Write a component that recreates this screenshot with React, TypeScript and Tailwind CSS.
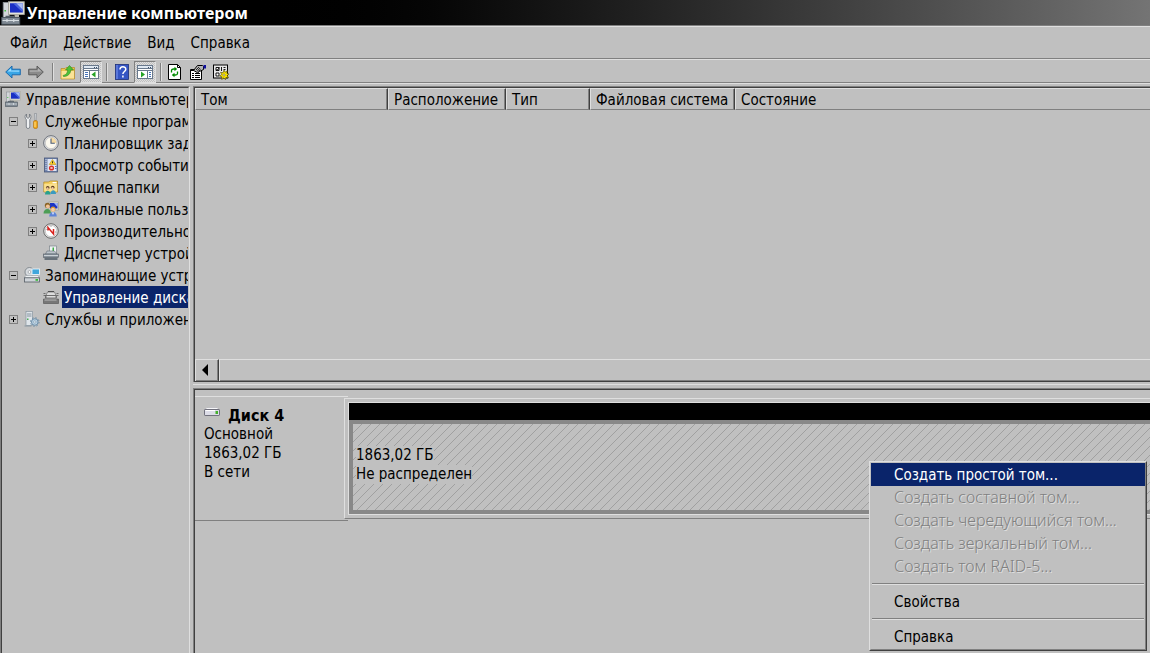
import { clsx } from "clsx";
import type { ReactNode } from "react";

function Svg({ size = 16, children }: { size?: number; children: ReactNode }) {
  return (
    <svg
      width={size}
      height={size}
      viewBox="0 0 16 16"
      className="block shrink-0"
      aria-hidden="true"
    >
      {children}
    </svg>
  );
}

function ComputerIcon({ size }: { size?: number }) {
  return (
    <Svg size={size}>
      <rect x="1.5" y="1" width="4" height="10" fill="#d3d6da" stroke="#8b9096" strokeWidth=".6" />
      <rect x="2.3" y="6" width="1" height="1" fill="#3fbf3f" />
      <rect x="5" y=".5" width="10.5" height="8.5" fill="#e4e4dc" stroke="#a5a59c" strokeWidth=".6" />
      <rect x="6" y="1.5" width="8.5" height="6.2" fill="#1a2fc4" />
      <path d="M10 1.5h4.5v4.5z" fill="#a9bdf5" />
      <path d="M8 1.5h2l4.5 4.5v1.7z" fill="#4c68e0" />
      <rect x="9" y="9" width="3" height="2" fill="#b9b9b0" />
      <path d="M3.5 11.5v-1.2h5v1.2" fill="none" stroke="#566069" />
      <rect x=".5" y="11" width="12" height="4.5" fill="#818b95" stroke="#4c565f" strokeWidth=".6" />
      <path d="M1 13h11M4 12v2M8.5 12v2" stroke="#d7dde2" strokeWidth=".8" />
    </Svg>
  );
}

function ToolsIcon() {
  return (
    <Svg>
      <path
        d="M2.5 1v3l1.5 1.5L5.5 4V1c1.8 1 2 4 .3 5.5V14c0 2-3.5 2-3.5 0V6.5C.4 5 .8 2 2.5 1z"
        fill="#eef0f2"
        stroke="#686f76"
        strokeWidth=".8"
      />
      <path d="M10.5.5h2l-.4 7h-1.2z" fill="#d0d4d8" stroke="#747b82" strokeWidth=".5" />
      <rect x="9.5" y="7.5" width="4" height="8" rx="1.5" fill="#f0a81c" stroke="#b06f08" strokeWidth=".6" />
      <path d="M11 9v5" stroke="#ffe08a" />
    </Svg>
  );
}

function ClockIcon() {
  return (
    <Svg>
      <circle cx="8" cy="8" r="7.4" fill="#d9dade" stroke="#70757c" />
      <circle cx="8" cy="8" r="5.7" fill="#fbf8ee" stroke="#a9a9a9" strokeWidth=".5" />
      <path d="M8 8h5.4A5.5 5.5 0 0 0 8 2.5z" fill="#f5d9a0" />
      <path d="M8 3.5V8.3h3.8" fill="none" stroke="#4a5b78" strokeWidth="1.1" />
    </Svg>
  );
}

function EventIcon() {
  return (
    <Svg>
      <rect x="1.5" y="1" width="13" height="14" fill="#7487b0" stroke="#465679" strokeWidth=".8" />
      <rect x="4.5" y="2" width="9" height="12" fill="#dfe6f4" />
      <path d="M3 2v12" stroke="#d4dbea" strokeDasharray="1 1" />
      <path d="M9.5 2.5l3.5 5H6.2z" fill="#ffd42a" stroke="#b38600" strokeWidth=".5" />
      <path d="M9.5 4.3v2" stroke="#222" strokeWidth=".9" />
      <circle cx="8.5" cy="11" r="2.6" fill="#d92f26" />
      <path d="M7.5 10l2 2m0-2l-2 2" stroke="#fff" strokeWidth=".8" />
      <path d="M12 9.5h1.5M12 11.5h1.5" stroke="#5a74b8" />
    </Svg>
  );
}

function SharedFolderIcon() {
  return (
    <Svg>
      <path d="M.8 3h5l1-1h7.7v11H.8z" fill="#f5cf5f" stroke="#ad8424" strokeWidth=".7" />
      <path d="M1.2 5h13v7.5h-13z" fill="#fbe08c" />
      <rect x="9.5" y="3" width="4" height="1.3" fill="#fff" />
      <circle cx="4.7" cy="8.8" r="1.8" fill="#5a3c1e" />
      <circle cx="9.7" cy="8.5" r="1.8" fill="#5a3c1e" />
      <circle cx="4.5" cy="9.5" r="1.2" fill="#f2c8a0" />
      <circle cx="9.5" cy="9.2" r="1.2" fill="#f2c8a0" />
      <path d="M2 15.5c0-5 5.5-5 5.5 0z" fill="#29a08c" />
      <path d="M7.5 15c0-5 5.5-5 5.5 0z" fill="#3a9ac0" />
    </Svg>
  );
}

function UsersIcon() {
  return (
    <Svg>
      <rect x="6" y="1" width="9.5" height="8" fill="#e2e2da" stroke="#8e8e86" strokeWidth=".6" />
      <rect x="7" y="2" width="7.5" height="5.5" fill="#1b35c6" />
      <path d="M11 2h3.5v4z" fill="#9db4f5" />
      <circle cx="4.5" cy="4.5" r="2.7" fill="#8a6428" />
      <circle cx="4.8" cy="5.3" r="1.9" fill="#f2c296" />
      <path d="M.5 12.5c0-6 7.5-6 7.5 0z" fill="#4d9e56" />
      <circle cx="10" cy="8" r="2.5" fill="#d7972c" />
      <circle cx="10" cy="8.7" r="1.9" fill="#f7cda4" />
      <path d="M6.2 15.5c0-6 7.6-6 7.6 0z" fill="#5e84d8" />
      <path d="M9 11.5l1 2.5 1-2.5z" fill="#fff" />
    </Svg>
  );
}

function PerformanceIcon() {
  return (
    <Svg>
      <circle cx="8" cy="8" r="7.3" fill="#e8e8e8" stroke="#686868" />
      <circle cx="8" cy="8" r="5.7" fill="#fff" stroke="#9a9a9a" strokeWidth=".5" />
      <path d="M5 7.5V4.5l5.5 6.5V6" fill="none" stroke="#d8201c" strokeWidth="1.5" />
      <path d="M3.500 6.5h1M12 9h1M8 2.8v1" stroke="#666" strokeWidth=".7" />
    </Svg>
  );
}

function DeviceIcon() {
  return (
    <Svg>
      <rect x="6.5" y="1" width="7" height="8" fill="#f0f2f4" stroke="#7b838a" strokeWidth=".7" />
      <rect x="9.5" y="2.5" width="1.5" height="4" fill="#3cae44" />
      <path d="M2.5 9l1.5-3h7.5l2.5 3z" fill="#bcc4cb" stroke="#636c75" strokeWidth=".6" />
      <rect x=".5" y="9" width="15" height="3.5" fill="#8b959e" stroke="#555e67" strokeWidth=".6" />
      <rect x="1.5" y="12.5" width="13" height="2.5" fill="#67717a" />
      <path d="M1 10.5h14" stroke="#dce1e5" strokeWidth=".8" />
    </Svg>
  );
}

function StorageIcon() {
  return (
    <Svg>
      <circle cx="5.5" cy="5" r="4.5" fill="#d7dbdf" stroke="#747b82" strokeWidth=".8" />
      <circle cx="5.5" cy="5" r="1.4" fill="#fff" stroke="#848b92" strokeWidth=".6" />
      <rect x="8" y="2" width="7.5" height="5.5" fill="#3fa6dc" stroke="#e7f2f8" strokeWidth=".9" />
      <path d="M1.5 8.5h12.5l1.5 2.5H.5z" fill="#eceff1" stroke="#8b9299" strokeWidth=".5" />
      <rect x=".5" y="10.8" width="15" height="4.2" fill="#ced3d8" stroke="#555d65" strokeWidth=".8" />
      <rect x="11.5" y="12" width="2.5" height="1.8" fill="#38b838" />
    </Svg>
  );
}

function DiskManagementIcon() {
  return (
    <Svg>
      <path d="M3 6.5L4.5 3h7L13 6.5z" fill="#dcdcdc" stroke="#6c6c6c" strokeWidth=".7" />
      <path d="M5 2.5h6" stroke="#4e4e4e" />
      <path d="M.5 4.5h2M13.5 4.5h2M.5 6.5H2M14 6.5h1.5" stroke="#6e6e6e" />
      <rect x="2.5" y="6.5" width="11" height="2.5" fill="#a9a9a9" stroke="#5b5b5b" strokeWidth=".7" />
      <path d="M4 7.8h8" stroke="#f2f2f2" />
      <path d="M.5 10h15v4.5H.5z" fill="#777" stroke="#505050" strokeWidth=".6" />
      <path d="M1.5 11h12" stroke="#ddd" strokeWidth=".7" />
    </Svg>
  );
}

function ServicesIcon() {
  return (
    <Svg>
      <rect x="2" y=".5" width="6.5" height="14" fill="#dfe5ea" stroke="#8996a0" strokeWidth=".7" />
      <path d="M3 3h4.5M3 5h4.5" stroke="#84929d" />
      <rect x="3" y="7.5" width="1.5" height="1.5" fill="#4aae55" />
      <path d="M.5 15h7" stroke="#8996a0" />
      <circle cx="10.8" cy="11" r="3.3" fill="#b9d0e2" stroke="#6d8ea8" />
      <circle cx="10.8" cy="11" r="4.3" fill="none" stroke="#6d8ea8" strokeDasharray="1.6 1.78" />
      <circle cx="10.8" cy="11" r="1.2" fill="#f0f5f8" stroke="#6d8ea8" strokeWidth=".6" />
    </Svg>
  );
}

function DriveIcon() {
  return (
    <Svg>
      <path d="M3 1.5h10l2 2H1z" fill="#f6f6f8" stroke="#a4a4ac" strokeWidth=".5" />
      <rect x=".5" y="3.5" width="15" height="6" rx=".6" fill="#dddde8" stroke="#70707c" />
      <path d="M1.5 4.5h9.5" stroke="#fff" />
      <rect x="11.5" y="5" width="2.5" height="3" fill="#43b02c" />
    </Svg>
  );
}

function BackIcon() {
  return (
    <Svg>
      <path d="M.7 8L7 2v3.2h8.3v5.6H7V14z" fill="#37a5e6" stroke="#1463a8" strokeWidth=".9" strokeLinejoin="round" />
      <path d="M2.5 7.5L6 4.2v2.3h8.3v1.2z" fill="#9bdcff" />
    </Svg>
  );
}

function ForwardIcon() {
  return (
    <Svg>
      <path d="M15.3 8L9 2v3.2H.7v5.6H9V14z" fill="#8a8a8a" stroke="#555" strokeWidth=".9" strokeLinejoin="round" />
      <path d="M13.5 7.5L10 4.2v2.3H1.7v1.2z" fill="#b3b3b3" />
    </Svg>
  );
}

function FolderUpIcon() {
  return (
    <Svg>
      <path d="M1 4.5h4l1-1h8.5V15H1z" fill="#f0c552" stroke="#b58a28" strokeWidth=".7" />
      <path d="M1.5 7h12.5v7.5H1.5z" fill="#fbe397" />
      <path
        d="M3 11.5c3.500-.5 4.500-3 4.700-5.500H5.500L9.500 1.500 13.500 6h-2.700c-.3 3.500-2.500 6.500-7.300 6.500z"
        fill="#4fc037"
        stroke="#2a8820"
        strokeWidth=".6"
      />
    </Svg>
  );
}

function PaneIcon({ flipped }: { flipped?: boolean }) {
  return (
    <Svg>
      <g shapeRendering="crispEdges">
        <rect x="0" y="1" width="16" height="14" fill="#68788c" />
        <rect x="1" y="2" width="14" height="2" fill="#dfe8f2" />
        <path d="M11 3h1M13 3h1" stroke="#3b4c64" />
        <rect x="1" y="5" width="14" height="1" fill="#fff" />
        <rect x="1" y="7" width={flipped ? 9 : 5} height="7" fill="#fff" />
        <rect x={flipped ? 11 : 7} y="7" width={flipped ? 4 : 8} height="7" fill="#fff" />
        <path
          d={flipped ? "M12 8.5h2M12 10.5h2M12 12.5h2" : "M2 8.5h3M2 10.5h3M2 12.5h3"}
          stroke="#4572b8"
        />
      </g>
      <path d={flipped ? "M4 7.5v6l4-3z" : "M12.5 7.5v6l-4-3z"} fill="#25a325" />
    </Svg>
  );
}

function HelpIcon() {
  return (
    <Svg>
      <rect x="1.5" y=".5" width="13" height="15" fill="#3455c4" stroke="#1c2f78" strokeWidth=".8" />
      <path d="M3 1v14" stroke="#7f9af0" />
      <path
        d="M6 5.5C6 2 11.8 2 11.8 5.3c0 2.2-2.9 2.2-2.9 4.7M8.9 11.5v2"
        fill="none"
        stroke="#fff"
        strokeWidth="1.5"
      />
    </Svg>
  );
}

function RefreshIcon() {
  return (
    <Svg>
      <path d="M1.5.5h9l3 3v12h-12z" fill="#fff" stroke="#000" />
      <path d="M10.5.5v3h3" fill="none" stroke="#000" />
      <path
        d="M4.5 8.500v-2c0-1 1-1.500 2-1.500H8M10.500 7.500v2c0 1-1 1.500-2 1.500H7"
        fill="none"
        stroke="#008a00"
        strokeWidth="1.3"
      />
      <path d="M7.5 2.8v4.4L10.2 5zM7.5 8.8v4.4L4.8 11z" fill="#008a00" />
    </Svg>
  );
}

function PropertiesIcon() {
  return (
    <Svg>
      <path d="M.5 5.5h11v10H.5z" fill="#fff" stroke="#000" />
      <path d="M1 6.5h10M2 9.5h2M5 9.5h5M2 11.5h2M5 11.5h5M2 13.5h2M5 13.5h5" stroke="#000" />
      <path d="M3.5 6.5l4-5h5l1 1v3l-4 2-2 1.5-1-1z" fill="#b4b4b4" stroke="#000" />
      <path d="M6 6l3-3M7 7.5L10 4M8.5 7.5l2-2" stroke="#000" strokeWidth=".8" />
      <path d="M13.5 1H16v3.5h-2.5z" fill="#1010a0" />
    </Svg>
  );
}

function SettingsIcon() {
  return (
    <Svg>
      <rect x=".5" y="1" width="14" height="13" fill="#e8e8e8" stroke="#000" />
      <path d="M3 3.5h3v3H3zM3 9h3v3H3z" fill="#fff" stroke="#000" strokeWidth=".9" />
      <path d="M8.5 3v4M10.5 3.5h2M10.5 5.5h2M3.5 5l1 1 2-2.5" fill="none" stroke="#000" strokeWidth=".9" />
      <path
        d="M11 6l1 2.300 2.300-1.500-.4 2.600 2.100.6-1.900 1.500 1.500 2.300-2.700-.4-.4 2.400-1.600-2-2.200 1.700.3-2.700-2.500-.7 2.200-1.600-1.200-2.200 2.500.5z"
        fill="#ffe800"
        stroke="#4a4200"
        strokeWidth=".6"
      />
      <circle cx="11" cy="11" r="1.1" fill="#fff" stroke="#4a4200" strokeWidth=".5" />
    </Svg>
  );
}

type TreeItem = {
  label: string;
  level: 0 | 1 | 2;
  icon: ReactNode;
  state?: "open" | "closed";
  selected?: boolean;
};

const tree: TreeItem[] = [
  { label: "Управление компьютером", level: 0, icon: <ComputerIcon /> },
  { label: "Служебные программы", level: 1, icon: <ToolsIcon />, state: "open" },
  { label: "Планировщик заданий", level: 2, icon: <ClockIcon />, state: "closed" },
  { label: "Просмотр событий", level: 2, icon: <EventIcon />, state: "closed" },
  { label: "Общие папки", level: 2, icon: <SharedFolderIcon />, state: "closed" },
  { label: "Локальные пользователи", level: 2, icon: <UsersIcon />, state: "closed" },
  { label: "Производительность", level: 2, icon: <PerformanceIcon />, state: "closed" },
  { label: "Диспетчер устройств", level: 2, icon: <DeviceIcon /> },
  { label: "Запоминающие устройства", level: 1, icon: <StorageIcon />, state: "open" },
  { label: "Управление дисками", level: 2, icon: <DiskManagementIcon />, selected: true },
  { label: "Службы и приложения", level: 1, icon: <ServicesIcon />, state: "closed" },
];

const columns = [
  { label: "Том", width: "w-[193px]" },
  { label: "Расположение", width: "w-[118px]" },
  { label: "Тип", width: "w-[84px]" },
  { label: "Файловая система", width: "w-[145px]" },
  { label: "Состояние", width: "w-auto" },
];

type MenuItem = { label: string; active?: boolean; disabled?: boolean };

const menuGroups: MenuItem[][] = [
  [
    { label: "Создать простой том...", active: true },
    { label: "Создать составной том...", disabled: true },
    { label: "Создать чередующийся том...", disabled: true },
    { label: "Создать зеркальный том...", disabled: true },
    { label: "Создать том RAID-5...", disabled: true },
  ],
  [{ label: "Свойства" }],
  [{ label: "Справка" }],
];

function Expander({ open }: { open: boolean }) {
  return (
    <button
      aria-label={open ? "Свернуть" : "Развернуть"}
      className="block size-[9px] border border-[#808080]"
    >
      <svg width="7" height="7" className="block" shapeRendering="crispEdges">
        <path d={open ? "M1 3.5h5" : "M1 3.5h5M3.5 1v5"} stroke="#000" />
      </svg>
    </button>
  );
}

function TreeRow({ item }: { item: TreeItem }) {
  return (
    <li
      className={clsx(
        "flex h-[22px] items-center whitespace-nowrap",
        item.level === 0 && "pl-[3px]",
        item.level === 1 && "pl-[7px]",
        item.level === 2 && "pl-[26px]",
      )}
    >
      {item.level > 0 && (
        <span className="mr-1.5 w-[9px] shrink-0">
          {item.state && <Expander open={item.state === "open"} />}
        </span>
      )}
      {item.icon}
      <a
        href="#"
        className={clsx(
          "ml-[3px] h-[22px] min-w-0 overflow-hidden px-0.5 leading-6",
          item.selected && "bg-[#0a246a] text-white",
        )}
      >
        {item.label}
      </a>
    </li>
  );
}

function ToolButton({
  label,
  pressed,
  children,
}: {
  label: string;
  pressed?: boolean;
  children: ReactNode;
}) {
  return (
    <button
      aria-label={label}
      aria-pressed={pressed}
      className={clsx(
        "flex h-[22px] items-center justify-center",
        pressed
          ? "w-[22px] border border-t-[#808080] border-r-[#dfdfdf] border-b-[#dfdfdf] border-l-[#808080] bg-[repeating-conic-gradient(#dfdfdf_0_25%,#c0c0c0_0_50%)] bg-size-[2px_2px]"
          : "w-4",
      )}
    >
      {children}
    </button>
  );
}

function ToolSeparator() {
  return (
    <div className="mr-0.5 h-[18px] w-0.5 border-r border-l border-r-[#dfdfdf] border-l-[#808080]" />
  );
}

function ContextMenu() {
  return (
    <div className="absolute top-[461px] left-[869px] w-[278px] border border-t-[#dfdfdf] border-r-[#404040] border-b-[#404040] border-l-[#dfdfdf] bg-[#c0c0c0]">
      <div className="border border-t-[#c0c0c0] border-r-[#808080] border-b-[#808080] border-l-[#c0c0c0] pb-px">
        {menuGroups.map((group, i) => (
          <div key={i}>
            {i > 0 && (
              <div className="flex h-3 items-center px-px">
                <hr className="h-0.5 w-full border-t border-b border-t-[#808080] border-b-[#dfdfdf]" />
              </div>
            )}
            {group.map((item) => (
              <button
                key={item.label}
                disabled={item.disabled}
                className={clsx(
                  "block h-[23px] w-full pl-[23px] text-left whitespace-nowrap",
                  item.active && "bg-[#0a246a] text-white",
                  item.disabled
                    ? "font-['Noto_Sans',sans-serif] text-[16px] leading-[23px] font-light text-[#808080] [text-shadow:1px_1px_0_#dfdfdf]"
                    : "leading-[25px]",
                )}
              >
                {item.label}
              </button>
            ))}
          </div>
        ))}
      </div>
    </div>
  );
}

function DiskRow() {
  return (
    <div className="flex">
      <div className="h-[125px] w-[153px] shrink-0 border-t border-b border-t-[#dfdfdf] border-b-[#808080] pt-[9px] pl-[9px] leading-[19px]">
        <div className="flex">
          <DriveIcon />
          <h2 className="ml-2 text-[16px] font-bold">Диск 4</h2>
        </div>
        <p>Основной</p>
        <p>1863,02 ГБ</p>
        <p>В сети</p>
      </div>
      <div className="mt-0.5 -ml-1 h-[121px] min-w-0 flex-1 border-t border-b border-l border-t-[#dfdfdf] border-b-[#808080] border-l-[#dfdfdf] pt-[3px] pl-[3px]">
        <div className="border-t border-b border-l border-[#dfdfdf]">
          <div className="h-[17px] bg-black" />
          <div className="relative h-[94px] border-4 border-r-0 border-[#888888] pt-[22px] pl-[3px] leading-[19px]">
            <svg className="absolute inset-0 size-full" aria-hidden="true">
              <defs>
                <pattern id="hatch" width="9" height="9" patternUnits="userSpaceOnUse">
                  <path d="M-1 10L10-1M-1 1L1-1M8 10L10 8" stroke="#929292" strokeWidth=".7" />
                </pattern>
              </defs>
              <rect width="100%" height="100%" fill="url(#hatch)" />
            </svg>
            <p className="relative w-fit bg-[#c0c0c0]">1863,02 ГБ</p>
            <p className="relative w-fit bg-[#c0c0c0]">Не распределен</p>
          </div>
        </div>
      </div>
    </div>
  );
}

export default function App() {
  return (
    <div className="relative flex h-screen flex-col overflow-hidden bg-[#c0c0c0] font-['DejaVu_Sans_Condensed','Noto_Sans',sans-serif] text-[15px] text-black">
      <header className="flex h-[25px] shrink-0 items-center bg-linear-to-r from-black from-20% to-[#747474] pl-px">
        <ComputerIcon size={24} />
        <h1 className="ml-0.5 font-['Noto_Sans',sans-serif] text-[16px] font-bold text-white">
          Управление компьютером
        </h1>
      </header>

      <nav className="flex h-[34px] shrink-0 items-center gap-4 border-t border-b border-t-[#808080] border-b-[#808080] pt-[3px] pl-2.5 shadow-[inset_0_1px_#dfdfdf]">
        <button>Файл</button>
        <button>Действие</button>
        <button>Вид</button>
        <button>Справка</button>
      </nav>

      <div className="flex h-[25px] shrink-0 items-center border-t border-b border-t-[#dfdfdf] border-b-[#dfdfdf] pl-[5px] shadow-[inset_0_-1px_#808080]">
        <div className="flex gap-[7px]">
          <ToolButton label="Назад">
            <BackIcon />
          </ToolButton>
          <ToolButton label="Вперед">
            <ForwardIcon />
          </ToolButton>
        </div>
        <div className="ml-2 flex items-center gap-1">
          <ToolSeparator />
          <ToolButton label="Вверх">
            <FolderUpIcon />
          </ToolButton>
          <ToolButton label="Дерево консоли" pressed>
            <PaneIcon />
          </ToolButton>
          <ToolSeparator />
          <ToolButton label="Справка">
            <HelpIcon />
          </ToolButton>
          <ToolButton label="Панель действий" pressed>
            <PaneIcon flipped />
          </ToolButton>
          <ToolSeparator />
        </div>
        <div className="ml-[3px] flex gap-[7px]">
          <ToolButton label="Обновить">
            <RefreshIcon />
          </ToolButton>
          <ToolButton label="Свойства">
            <PropertiesIcon />
          </ToolButton>
          <ToolButton label="Параметры">
            <SettingsIcon />
          </ToolButton>
        </div>
      </div>

      <main className="flex min-h-0 flex-1 gap-[3px] pt-0.5">
        <aside className="w-[190px] shrink-0 border-t border-r border-l border-t-[#808080] border-r-[#dfdfdf] border-l-[#808080]">
          <ul className="h-full overflow-hidden border-t border-r border-l border-t-[#404040] border-r-[#c0c0c0] border-l-[#404040]">
            {tree.map((item) => (
              <TreeRow key={item.label} item={item} />
            ))}
          </ul>
        </aside>

        <div className="flex min-w-0 flex-1 flex-col">
          <section className="border-t border-l border-[#808080]">
            <div className="border-t border-b border-l border-[#404040]">
              <table className="w-full table-fixed border-separate border-spacing-0">
                <thead>
                  <tr>
                    {columns.map((col, i) => (
                      <th
                        key={col.label}
                        className={clsx(
                          "h-[22px] border-t border-b border-l border-t-[#dfdfdf] border-b-[#808080] border-l-[#dfdfdf] p-0 pt-0.5 pl-[5px] text-left leading-[18px] font-normal whitespace-nowrap",
                          i < columns.length - 1 &&
                            "border-r border-r-[#404040] shadow-[inset_-1px_0_#808080]",
                          col.width,
                        )}
                      >
                        {col.label}
                      </th>
                    ))}
                  </tr>
                </thead>
              </table>
              <div className="h-[249px]" />
              <div className="flex h-[22px]">
                <button
                  aria-label="Прокрутить влево"
                  className="flex w-6 items-center border-t border-r border-l border-t-[#dfdfdf] border-r-[#404040] border-l-[#dfdfdf] pb-px pl-1.5 shadow-[inset_-1px_-1px_#808080]"
                >
                  <svg width="6" height="12" className="block">
                    <path d="M6 0v12L0 6z" />
                  </svg>
                </button>
                <div className="flex-1 border-t border-l border-[#dfdfdf] shadow-[inset_0_-1px_#808080]" />
              </div>
            </div>
          </section>

          <div className="flex h-1.5 shrink-0 items-center pb-px">
            <div className="h-px w-full bg-[#dfdfdf]" />
          </div>

          <section className="min-h-0 flex-1 border-t border-l border-[#808080]">
            <div className="h-full border-t border-l border-[#404040] pt-1.5">
              <DiskRow />
            </div>
          </section>
        </div>
      </main>

      <ContextMenu />
    </div>
  );
}
